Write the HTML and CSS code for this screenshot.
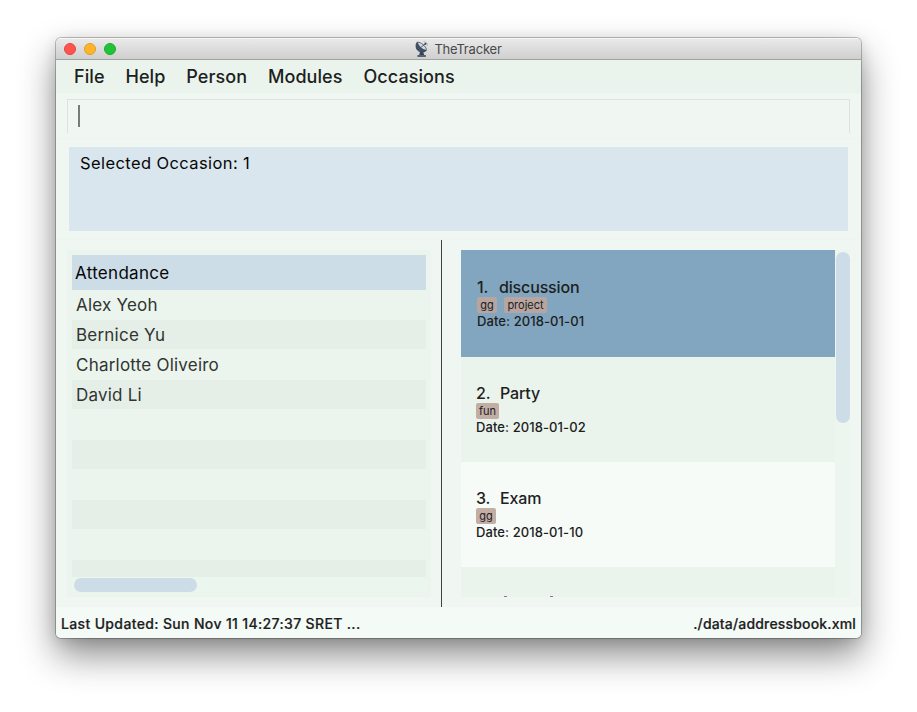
FILE: index.html
```html
<!DOCTYPE html>
<html lang="en">
<head>
<meta charset="utf-8">
<title>TheTracker</title>
<link rel="stylesheet" href="styles.css">
</head>
<body>
<main class="window">
  <header class="titlebar">
    <div class="lights"><i class="light close"></i><i class="light minimise"></i><i class="light zoom"></i></div>
    <div class="title">
      <svg width="14" height="16" viewBox="0 0 14 16" fill="none" stroke="#2f3d50">
        <path d="M2.2 1.2C.3 3.6.7 8 3.5 9.9c2.6 1.8 6.2 1.3 7.7-.5Z" fill="#435166" stroke-width=".8"/>
        <path d="M2.5 1.1C5.3.9 12 5.4 11.3 9.3 8.2 9.3 2.7 5.1 2.5 1.1Z" fill="#d5d9de" stroke-width=".7"/>
        <path d="m6.2 6 4.2-3.2" stroke-width=".8"/>
        <circle cx="10.5" cy="2.8" r="1" fill="#2f3d50" stroke="none"/>
        <path d="M8.6.8c2.2-.1 3.8 1.4 3.9 3.6" stroke="#8e969f" stroke-width=".7"/>
        <path d="M5 10.7 4.2 14h5l-1-3.3Z" fill="#35455a" stroke="none"/>
        <path d="M2.4 15h8.5" stroke-width="1.5"/>
      </svg>
      <span>TheTracker</span>
    </div>
  </header>
  <nav class="menu"><span>File</span><span>Help</span><span>Person</span><span>Modules</span><span>Occasions</span></nav>
  <section class="command"><div class="field"><i class="caret"></i></div></section>
  <section class="result"><div class="display">Selected Occasion: 1</div></section>
  <section class="content">
    <div class="attendance">
      <div class="heading">Attendance</div>
      <div class="rows">
        <div class="row">Alex Yeoh</div>
        <div class="row">Bernice Yu</div>
        <div class="row">Charlotte Oliveiro</div>
        <div class="row">David Li</div>
        <div class="row"></div><div class="row"></div><div class="row"></div><div class="row"></div><div class="row"></div><div class="row"></div>
      </div>
      <div class="htrack"><div class="hthumb"></div></div>
    </div>
    <div class="divider"></div>
    <div class="occasions">
      <div class="cards">
        <article class="card selected"><h2><span class="num">1.</span><span class="name">discussion</span></h2><div class="tags"><span class="tag">gg</span><span class="tag project">project</span></div><p>Date: 2018-01-01</p></article>
        <article class="card"><h2><span class="num">2.</span><span class="name">Party</span></h2><div class="tags"><span class="tag fun">fun</span></div><p>Date: 2018-01-02</p></article>
        <article class="card pale"><h2><span class="num">3.</span><span class="name">Exam</span></h2><div class="tags"><span class="tag">gg</span></div><p>Date: 2018-01-10</p></article>
        <article class="card last"><i class="tip"></i><i class="tip"></i></article>
      </div>
      <div class="vtrack"><div class="vthumb"></div></div>
    </div>
  </section>
  <footer class="status"><span class="updated">Last Updated: Sun Nov 11 14:27:37 SRET ...</span><span class="path">./data/addressbook.xml</span></footer>
</main>
</body>
</html>
```
FILE: styles.css
```css
* { box-sizing: border-box; }
body { margin: 0; height: 712px; padding: 38px 56px; background: #fff; overflow: hidden; font-family: Inter, "Liberation Sans", sans-serif; color: #1c211e; }
.window { width: 805px; height: 600px; display: flex; flex-direction: column; border-radius: 5px; overflow: hidden; background: #f0f7f3; box-shadow: 0 0 0 1px rgba(0,0,0,.24), 0 17px 36px rgba(0,0,0,.46), 0 3px 14px rgba(0,0,0,.12); }
.titlebar { height: 22px; flex: none; display: grid; grid-template-columns: 1fr auto 1fr; align-items: center; background: linear-gradient(#e9e9e9, #cfcfcf); border-top: 1px solid #f7f7f7; border-bottom: 1px solid #a2a4a2; }
.lights { display: flex; gap: 8px; padding-left: 8px; }
.light { width: 12px; height: 12px; border-radius: 50%; border: 1px solid; }
.close { background: #ff534e; border-color: #e2443e; }
.minimise { background: #ffb429; border-color: #df9d27; }
.zoom { background: #21c337; border-color: #1eaa2c; }
.title { display: flex; align-items: center; gap: 5px; font-size: 13px; color: #494949; letter-spacing: -.2px; }
.menu { height: 33px; flex: none; background: #eaf4ec; display: flex; align-items: center; gap: 20.85px; padding-left: 18px; font-size: 18px; font-weight: 500; white-space: nowrap; letter-spacing: .08px; }
.command { height: 46px; flex: none; padding: 6px 11px 0; border-bottom: 1px solid #edf5f0; }
.field { height: 34px; border: 1px solid #dce3df; border-bottom: 0; padding: 5px 10px; }
.caret { display: block; width: 2px; height: 22px; background: #777b79; }
.result { height: 101px; flex: none; padding: 8px 13px 0; border-bottom: 1px solid #edf5f0; }
.display { height: 84px; background: #dae6ee; padding: 6px 11px; font-size: 16.5px; line-height: 20px; color: #060708; letter-spacing: .4px; }
.content { height: 367px; flex: none; display: flex; }
.attendance { width: 364px; height: 347px; margin: 10px 10px 0 11px; padding: 5px 5px 0; background: #ebf4ed; display: flex; flex-direction: column; }
.heading { height: 35px; flex: none; background: #cddde8; padding-left: 3px; font-size: 17px; line-height: 36px; color: #050607; letter-spacing: .3px; }
.rows { height: 287px; overflow: hidden; }
.row { height: 29px; margin-bottom: 1px; padding-left: 4px; font-size: 17px; line-height: 30px; color: #303532; letter-spacing: .22px; }
.row:nth-child(even) { background: #e5efe8; }
.htrack { height: 15px; padding: 1px 2px 0; background: #ebf6ee; }
.hthumb { width: 123px; height: 14px; border-radius: 7px; background: #cddde8; }
.divider { width: 1px; background: #404542; }
.occasions { margin: 10px 0 0 19px; height: 347px; display: flex; }
.cards { width: 374px; overflow: hidden; }
.card { height: 105px; padding: 25px 15px 0; background: #eaf4ec; }
.selected { height: 107px; padding: 26px 16px 0; background: #82a6c0; }
.pale { background: #f6fbf8; }
h2 { display: flex; margin: 0; height: 21px; font-size: 16px; line-height: 22px; font-weight: 500; letter-spacing: -.15px; }
.num { width: 24px; }
.selected .num { width: 22px; }
.tags { display: flex; gap: 7px; }
.tag { height: 16px; width: 20px; text-align: center; border-radius: 2px; background: #c3aea6; font-size: 11px; line-height: 17px; }
.selected .tag { background: #b8a5a0; }
.tag.project { width: 43px; }
.tag.fun { width: 23px; }
p { margin: 0; font-size: 13px; line-height: 17px; font-weight: 500; white-space: nowrap; letter-spacing: .09px; }
.last { display: flex; gap: 43px; padding: 29px 0 0 43px; }
.tip { width: 3px; height: 1px; background: #7c827e; }
.vtrack { width: 15px; padding: 2px 0 0 1px; background: #ecf6ef; }
.vthumb { width: 14px; height: 171px; border-radius: 7px; background: #cddde8; }
.status { flex: 1; background: #f4faf6; display: flex; justify-content: space-between; padding: 8px 5px 0; font-size: 14px; line-height: 18px; font-weight: 500; white-space: nowrap; -webkit-text-stroke: .2px #1c211e; }
.updated { letter-spacing: .35px; }
.path { letter-spacing: .17px; }
```
